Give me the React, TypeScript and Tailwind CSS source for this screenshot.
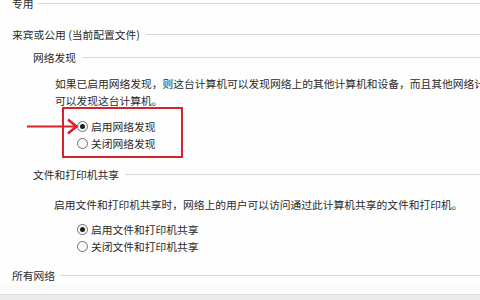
import React from "react";

function Heading({ text, gap = "ml-[6px]" }: { text: string; gap?: string }) {
  return (
    <div className="flex items-center h-[17px]">
      <span className="whitespace-nowrap">{text}</span>
      <div className={`flex-1 h-px bg-[#d9d9d9] ${gap}`} />
    </div>
  );
}

function Radio({ checked, label }: { checked?: boolean; label: string }) {
  return (
    <div className="flex items-center h-[17px]">
      <div className="w-[11px] h-[11px] rounded-full border border-[#707070] bg-[#fafafa] flex items-center justify-center shrink-0">
        {checked && <div className="w-[5px] h-[5px] rounded-full bg-[#1f1f1f]" />}
      </div>
      <span className="ml-[3px] whitespace-nowrap">{label}</span>
    </div>
  );
}

export default function App() {
  return (
    <div className="w-[480px] h-[300px] overflow-hidden bg-[#fefefe] text-[10.75px] leading-[17px] text-[#2a2a2a] font-['Noto_Sans_CJK_SC',sans-serif] relative flex flex-col">
      <div className="pl-[12px] mt-[-5px]">
        <Heading text="专用" gap="ml-[4px]" />
      </div>
      <div className="pl-[12px] mt-[13.5px]">
        <Heading text="来宾或公用 (当前配置文件)" />
      </div>
      <div className="pl-[33px] mt-[6px]">
        <Heading text="网络发现" />
      </div>
      <div className="pl-[55px] mt-[9px] whitespace-nowrap">
        <div>如果已启用网络发现，则这台计算机可以发现网络上的其他计算机和设备，而且其他网络计算机</div>
        <div>可以发现这台计算机。</div>
      </div>
      <div className="pl-[62px] mt-[-1.5px]">
        <div className="w-[121px] h-[51px] border-2 border-[#d5232a] pl-[13px] pt-[8.5px]">
          <Radio checked label="启用网络发现" />
          <Radio label="关闭网络发现" />
        </div>
      </div>
      <div className="pl-[33px] mt-[7.5px]">
        <Heading text="文件和打印机共享" />
      </div>
      <div className="pl-[54px] mt-[13px] whitespace-nowrap">
        启用文件和打印机共享时，网络上的用户可以访问通过此计算机共享的文件和打印机。
      </div>
      <div className="pl-[77px] mt-[8px]">
        <Radio checked label="启用文件和打印机共享" />
        <Radio label="关闭文件和打印机共享" />
      </div>
      <div className="pl-[12px] mt-[12px]">
        <Heading text="所有网络" gap="ml-[5px]" />
      </div>
      <div className="flex-1 bg-[#fbfbfb] mt-[1px]" />
      <div className="h-[6px] border-t border-[#dcdcdc] bg-[#ebebeb]" />

      <svg className="absolute left-0 top-0 pointer-events-none" width="480" height="300">
        <line x1="27" y1="126.5" x2="75" y2="126.5" stroke="#d5232a" strokeWidth="2" />
        <polyline points="68,119.5 76.5,126.5 68,133.5" fill="none" stroke="#d5232a" strokeWidth="2.6" strokeLinejoin="miter" />
      </svg>
    </div>
  );
}
